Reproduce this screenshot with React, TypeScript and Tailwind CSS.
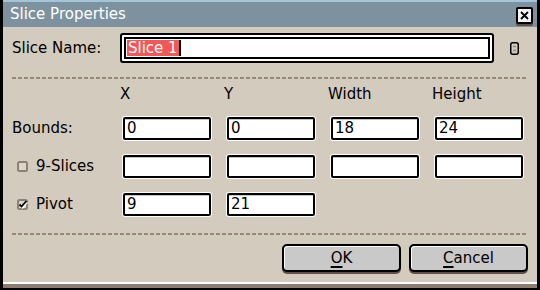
import React from 'react';

const FONT = "font-['DejaVu_Sans',_'Liberation_Sans',_sans-serif]";

function Field({ value }: { value?: string }) {
  return (
    <div className="rounded-[3px] bg-white p-px">
      <div className="flex h-[23px] items-center rounded-[2px] border-2 border-black bg-white pl-[2px] leading-none shadow-[inset_0_1px_0_#c4c4c4]">
        {value}
      </div>
    </div>
  );
}

function Dashed() {
  return (
    <div className="mx-[9px] h-[2px] bg-[repeating-linear-gradient(90deg,#978879_0_4px,transparent_4px_6px)]" />
  );
}

function Check({ checked }: { checked?: boolean }) {
  return (
    <svg width="11" height="11" viewBox="0 0 11 11" className="shrink-0">
      <rect x="1" y="1" width="9" height="9" rx="1.5" fill="#ddd5ca" stroke="#8f8076" strokeWidth="2" />
      {checked && (
        <>
          <path d="M2.5 6 L4.5 8 L9.5 2.5" fill="none" stroke="#fff" strokeWidth="1.4" transform="translate(0.9,0.9)" />
          <path d="M2.5 5.5 L4.5 7.5 L9.5 2" fill="none" stroke="#000" strokeWidth="1.8" />
        </>
      )}
    </svg>
  );
}

function Button({ first, rest }: { first: string; rest: string }) {
  return (
    <div className="flex h-[28px] w-[119px] items-center justify-center rounded-[5px] border-2 border-black bg-[#c9c9c9] shadow-[inset_1px_1px_0_#ffffff,0_2px_0_#5e5047]">
      <span className="underline decoration-2 underline-offset-[3px]">{first}</span>
      <span>{rest}</span>
    </div>
  );
}

export default function App() {
  return (
    <div className={`flex h-[290px] w-[540px] flex-col bg-black px-[3px] pb-[2px] text-[15px] text-black ${FONT}`}>
      {/* title bar */}
      <div className="flex h-[27px] shrink-0 items-center justify-between border-t-2 border-[#a4c4da] bg-[#7d929e] pl-[7px] pr-[4px]">
        <span className="text-white">Slice Properties</span>
        <div className="mt-[2px] flex h-[17px] w-[17px] items-center justify-center rounded-[2px] border-2 border-black bg-[#f4f4f4] shadow-[0_2px_0_#5e5047]">
          <svg width="9" height="9" viewBox="0 0 9 9">
            <path d="M1 1 L8 8 M8 1 L1 8" stroke="#000" strokeWidth="1.8" />
          </svg>
        </div>
      </div>

      {/* body */}
      <div className="flex flex-1 flex-col border-b-2 border-white bg-[#d3cbbe]">
        <div className="mt-[6px] flex items-center pl-[9px]">
          <span className="w-[108px]">Slice Name:</span>
          <div className="h-[30px] w-[374px] rounded-[3px] border-2 border-black bg-white p-[2px]">
            <div className="flex h-full items-center border-2 border-black bg-white pl-px">
              <span className="bg-[#f45757] px-px leading-[16px] text-white">Slice 1</span>
              <span className="h-[16px] w-[2px] bg-black" />
            </div>
          </div>
          <svg width="9" height="13" viewBox="0 0 9 13" className="ml-[16px]">
            <rect x="0.75" y="0.75" width="7.5" height="11.5" rx="2" fill="#d3cbbe" stroke="#000" strokeWidth="1.5" />
            <path d="M3 4.5 H6 M3 8.5 H6" stroke="#8a8a8a" strokeWidth="1.5" />
          </svg>
        </div>

        <div className="mt-[14px]">
          <Dashed />
        </div>

        <div className="mt-[7px] grid grid-cols-[96px_90px_90px_90px_90px] grid-rows-[17px_25px_25px_25px] items-center gap-x-[14px] gap-y-[13px] pl-[9px]">
          <span />
          <span className="-ml-[2px] self-start leading-[17px]">X</span>
          <span className="-ml-[2px] self-start leading-[17px]">Y</span>
          <span className="-ml-[2px] self-start leading-[17px]">Width</span>
          <span className="-ml-[2px] self-start leading-[17px]">Height</span>

          <span>Bounds:</span>
          <Field value="0" />
          <Field value="0" />
          <Field value="18" />
          <Field value="24" />

          <div className="flex items-center gap-[8px] pl-[5px]">
            <Check />
            <span>9-Slices</span>
          </div>
          <Field />
          <Field />
          <Field />
          <Field />

          <div className="flex items-center gap-[8px] pl-[5px]">
            <Check checked />
            <span>Pivot</span>
          </div>
          <Field value="9" />
          <Field value="21" />
        </div>

        <div className="mt-[16px]">
          <Dashed />
        </div>

        <div className="mt-[9px] flex justify-end gap-[8px] pr-[9px]">
          <Button first="O" rest="K" />
          <Button first="C" rest="ancel" />
        </div>
      </div>
      <div className="h-[4px] shrink-0 bg-[#8d7d71]" />
    </div>
  );
}
